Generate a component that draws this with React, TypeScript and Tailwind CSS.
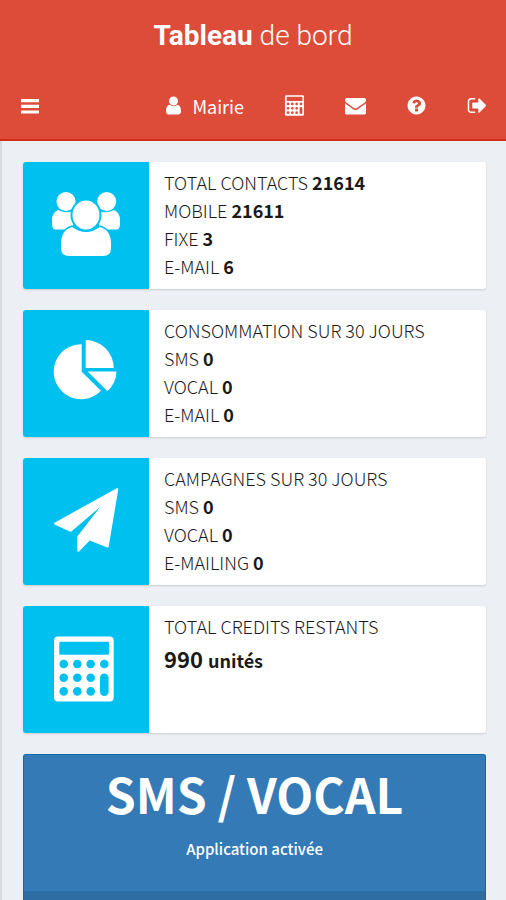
import type { ReactNode } from "react";

interface StatLine {
  label: string;
  value?: string;
}

interface StatCardProps {
  icon: ReactNode;
  lines: StatLine[];
  children?: ReactNode;
}

const NavIcon = ({ d }: { d: string }) => (
  <svg viewBox="0 0 1792 1792" className="size-[21px] fill-current" aria-hidden="true">
    <path d={d} />
  </svg>
);

const userPath =
  "M1536 1399q0 109-62.5 187t-150.5 78h-854q-88 0-150.5-78t-62.5-187q0-85 8.5-160.5t31.5-152 58.5-131 94-89 134.5-34.5q131 128 313 128t313-128q76 0 134.5 34.5t94 89 58.5 131 31.5 152 8.5 160.5zm-256-887q0 159-112.5 271.5t-271.5 112.5-271.5-112.5-112.5-271.5 112.5-271.5 271.5-112.5 271.5 112.5 112.5 271.5z";
const envelopePath =
  "M1792 710v794q0 66-47 113t-113 47h-1472q-66 0-113-47t-47-113v-794q44 49 101 87 362 246 497 345 57 42 92.5 65.5t94.5 48 110 24.5h2q51 0 110-24.5t94.5-48 92.5-65.5q170-123 498-345 57-39 100-87zm0-294q0 79-49 151t-122 123q-376 261-468 325-10 7-42.5 31t-54 38.5-52 32.5-57.5 27-50 9h-2q-23 0-50-9t-57.5-27-52-32.5-54-38.5-42.5-31q-91-64-262-182.5t-205-142.5q-62-42-117-115.5t-55-136.5q0-78 41.5-130t118.5-52h1472q65 0 112.5 47t47.5 113z";
const questionPath =
  "M1024 1376v-192q0-14-9-23t-23-9h-192q-14 0-23 9t-9 23v192q0 14 9 23t23 9h192q14 0 23-9t9-23zm256-672q0-88-55.5-163t-138.5-116-170-41q-243 0-371 213-15 24 8 42l132 100q7 6 19 6 16 0 25-12 53-68 86-92 34-24 86-24 48 0 85.5 26t37.5 59q0 38-20 61t-68 45q-63 28-115.5 86.5t-52.5 125.5v36q0 14 9 23t23 9h192q14 0 23-9t9-23q0-19 21.5-49.5t54.5-49.5q32-18 49-28.5t46-35 44.5-48 28-60.5 12.5-81zm384 192q0 209-103 385.5t-279.5 279.5-385.5 103-385.5-103-279.5-279.5-103-385.5 103-385.5 279.5-279.5 385.5-103 385.5 103 279.5 279.5 103 385.5z";
const signOutPath =
  "M704 1440q0 4 1 20t.5 26.5-3 23.5-10 19.5-20.5 6.5h-320q-119 0-203.5-84.5t-84.5-203.5v-704q0-119 84.5-203.5t203.5-84.5h320q13 0 22.5 9.5t9.5 22.5q0 4 1 20t.5 26.5-3 23.5-10 19.5-20.5 6.5h-320q-66 0-113 47t-47 113v704q0 66 47 113t113 47h312l11.5 1 11.5 3 8 5.5 7 9 2 13.5zm928-544q0 26-19 45l-544 544q-19 19-45 19t-45-19-19-45v-288h-448q-26 0-45-19t-19-45v-384q0-26 19-45t45-19h448v-288q0-26 19-45t45-19 45 19l544 544q19 19 19 45z";

const PeopleIcon = () => (
  <svg viewBox="0 0 72 72" className="size-[72px] fill-white" aria-hidden="true">
    <circle cx="16" cy="11.500" r="9.500" />
    <circle cx="56.700" cy="11.500" r="9.500" />
    <path d="M8 20q8 4 15 1v20H9q-7 0-7-7v-4q0-7 6-10z" />
    <path d="M64 20q-8 4-15 1v20h14q7 0 7-7v-4q0-7-6-10z" />
    <path d="M0 39.500h72v4H0z" className="fill-[#00c0ef]" />
    <path
      d="M22 37q14 10 28 0 11 3 11 17v4q0 8-8 8H19q-8 0-8-8v-4q0-14 11-17z"
      className="stroke-[#00c0ef] stroke-[3px] [paint-order:stroke]"
    />
    <ellipse
      cx="36"
      cy="25"
      rx="13.500"
      ry="14.500"
      className="stroke-[#00c0ef] stroke-[4px] [paint-order:stroke]"
    />
  </svg>
);

const PieIcon = () => (
  <svg viewBox="0 0 72 72" className="size-[72px] fill-white" aria-hidden="true">
    <path d="M31.700 6.200V33.700L51 52.800A27.500 27.500 0 1 1 31.700 6.200z" />
    <path d="M35.700 2A28 28 0 0 1 63.700 30H35.700z" />
    <path d="M37.700 33.500H66.500A28 28 0 0 1 57.500 53.200z" />
  </svg>
);

const PlaneIcon = () => (
  <svg
    viewBox="0 0 72 72"
    className="size-[72px] fill-white stroke-white stroke-2 [stroke-linejoin:round]"
    aria-hidden="true"
  >
    <path d="M67.300 3L5 37.600l15.700 7.200L57 13.800 28.300 50.800V64.800L39.500 53.300l18.200 7.200z" />
  </svg>
);

const CalculatorIcon = ({ viewBox, className }: { viewBox: string; className: string }) => (
  <svg viewBox={viewBox} className={className} aria-hidden="true">
    <path
      fillRule="evenodd"
      d="M8 2.400h51.700q4 0 4 4v57q0 4-4 4H8q-4 0-4-4v-57q0-4 4-4zM10.500 7.700q-1.200 0-1.200 1.200v10.600q0 1.200 1.200 1.200h47.300q1.200 0 1.200-1.200V8.900q0-1.200-1.200-1.200zM50 43.700v14a4.300 4.300 0 0 0 8.600 0v-14a4.300 4.300 0 0 0-8.600 0zM9.400 30a4.300 4.300 0 1 0 8.600 0 4.300 4.300 0 1 0-8.600 0zM23 30a4.300 4.300 0 1 0 8.600 0 4.300 4.300 0 1 0-8.600 0zM36.400 30a4.300 4.300 0 1 0 8.600 0 4.300 4.300 0 1 0-8.600 0zM50 30a4.300 4.300 0 1 0 8.600 0 4.300 4.300 0 1 0-8.600 0zM9.400 43.700a4.300 4.300 0 1 0 8.600 0 4.300 4.300 0 1 0-8.600 0zM23 43.700a4.300 4.300 0 1 0 8.600 0 4.300 4.300 0 1 0-8.600 0zM36.400 43.700a4.300 4.300 0 1 0 8.600 0 4.300 4.300 0 1 0-8.600 0zM9.400 57.400a4.300 4.300 0 1 0 8.600 0 4.300 4.300 0 1 0-8.600 0zM23 57.400a4.300 4.300 0 1 0 8.600 0 4.300 4.300 0 1 0-8.600 0zM36.400 57.400a4.300 4.300 0 1 0 8.600 0 4.300 4.300 0 1 0-8.600 0z"
    />
  </svg>
);

const StatCard = ({ icon, lines, children }: StatCardProps) => (
  <section className="flex min-h-[127px] rounded-[3px] bg-white shadow-[0_1px_2px_rgba(0,0,0,0.15)]">
    <div className="flex w-[126px] shrink-0 items-center justify-center rounded-l-[3px] bg-[#00c0ef]">
      {icon}
    </div>
    <div className="px-[15px] pt-[6px] text-[18px] leading-7 text-[#1a1a1a]">
      {lines.map((line) => (
        <p key={line.label} className="font-light">
          {line.label} {line.value && <strong className="font-bold">{line.value}</strong>}
        </p>
      ))}
      {children}
    </div>
  </section>
);

export default function App() {
  return (
    <div className="flex min-h-screen flex-col border-l-2 border-[#d8dce2] bg-[#ecf0f5] font-['Noto_Sans_CJK_JP',sans-serif]">
      <header className="-ml-0.5 border-b-2 border-[#cf2f18] bg-[#dd4b39] text-white">
        <h1 className="text-center font-[Roboto,sans-serif] text-[28px] leading-[72px] font-light">
          <b className="font-bold">Tableau</b> de bord
        </h1>
        <nav className="flex h-[67px] items-center justify-between pr-[18px] pl-5">
          <button type="button" aria-label="Menu">
            <svg viewBox="0 0 20 20" className="size-5 fill-current" aria-hidden="true">
              <path d="M1 3h18v3.200H1zM1 8.700h18v3.200H1zM1 14.400h18v3.200H1z" />
            </svg>
          </button>
          <div className="flex items-center gap-10">
            <a href="#compte" className="flex items-center gap-2 text-[18px] leading-7">
              <NavIcon d={userPath} />
              Mairie
            </a>
            <a href="#credits" aria-label="Crédits">
              <CalculatorIcon viewBox="3 2 62 66" className="size-[21px] fill-current" />
            </a>
            <a href="#messages" aria-label="Messages">
              <NavIcon d={envelopePath} />
            </a>
            <a href="#aide" aria-label="Aide">
              <NavIcon d={questionPath} />
            </a>
            <a href="#deconnexion" aria-label="Déconnexion">
              <NavIcon d={signOutPath} />
            </a>
          </div>
        </nav>
      </header>

      <main className="flex flex-1 flex-col gap-[21px] pt-[21px] pr-5 pl-[21px]">
        <StatCard
          icon={<PeopleIcon />}
          lines={[
            { label: "TOTAL CONTACTS", value: "21614" },
            { label: "MOBILE", value: "21611" },
            { label: "FIXE", value: "3" },
            { label: "E-MAIL", value: "6" },
          ]}
        />
        <StatCard
          icon={<PieIcon />}
          lines={[
            { label: "CONSOMMATION SUR 30 JOURS" },
            { label: "SMS", value: "0" },
            { label: "VOCAL", value: "0" },
            { label: "E-MAIL", value: "0" },
          ]}
        />
        <StatCard
          icon={<PlaneIcon />}
          lines={[
            { label: "CAMPAGNES SUR 30 JOURS" },
            { label: "SMS", value: "0" },
            { label: "VOCAL", value: "0" },
            { label: "E-MAILING", value: "0" },
          ]}
        />
        <StatCard
          icon={<CalculatorIcon viewBox="0 0 72 72" className="size-[72px] fill-white" />}
          lines={[{ label: "TOTAL CREDITS RESTANTS" }]}
        >
          <p className="text-[22px] leading-9 font-bold">
            990 <span className="text-[18px]">unités</span>
          </p>
        </StatCard>

        <section className="flex flex-1 flex-col rounded-t-[3px] border border-b-0 border-[#0f69a9] bg-[#337ab7] text-center text-white">
          <h2 className="pt-2 text-[48px] leading-[60px] font-bold">SMS / VOCAL</h2>
          <p className="pt-3 pb-7 text-[15px] leading-7 font-medium">Application activée</p>
          <div className="min-h-2 flex-1 bg-[#2e6da4]" />
        </section>
      </main>
    </div>
  );
}
